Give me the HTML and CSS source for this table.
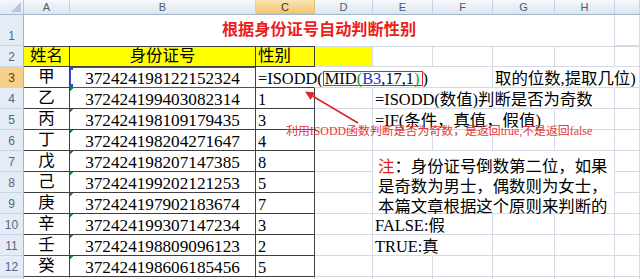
FILE: index.html
```html
<!DOCTYPE html>
<html lang="zh-CN">
<head>
<meta charset="utf-8">
<title>根据身份证号自动判断性别</title>
<link rel="stylesheet" href="styles.css">
</head>
<body>
<div class="sheet">
  <div class="grid">
    <div class="corner"><span class="tri"></span></div>
    <div class="ch">A</div><div class="ch">B</div><div class="ch sel">C</div><div class="ch">D</div><div class="ch">E</div><div class="ch">F</div><div class="ch">G</div><div class="ch">H</div><div class="ch"></div>

    <div class="rh">1</div>
    <div class="cell title">根据身份证号自动判断性别</div>
    <div class="cell"></div>

    <div class="rh">2</div>
    <div class="cell tb yl ctr topd name">姓名</div>
    <div class="cell tb yl ctr topd name">身份证号</div>
    <div class="cell tb yl topd name">性别</div>
    <div class="cell yl topg"></div>
    <div class="cell topg"></div><div class="cell topg"></div><div class="cell topg"></div><div class="cell topg"></div><div class="cell topg"></div>

    <div class="rh sel">3</div>
    <div class="cell tb ctr name">甲</div>
    <div class="cell tb ctr id ref">372424198122152324</div>
    <div class="cell tb nr">=ISODD(<span class="box">MID<span class="g">(</span><span class="b">B3</span>,17,1<span class="g">)</span></span>)</div>
    <div class="cell nr"></div>
    <div class="cell nr"></div>
    <div class="cell"></div>
    <div class="cell nr">取的位数,提取几位)</div>
    <div class="cell nr"></div>
    <div class="cell"></div>

    <div class="rh">4</div>
    <div class="cell tb ctr name">乙</div>
    <div class="cell tb ctr id gt">372424199403082314</div>
    <div class="cell tb">1</div>
    <div class="cell"></div>
    <div class="cell nr">=ISODD(数值)判断是否为奇数</div>
    <div class="cell nr"></div>
    <div class="cell nr"></div>
    <div class="cell"></div>
    <div class="cell"></div>

    <div class="rh">5</div>
    <div class="cell tb ctr name">丙</div>
    <div class="cell tb ctr id gt">372424198109179435</div>
    <div class="cell tb">3</div>
    <div class="cell"></div>
    <div class="cell nr">=IF(条件，真值，假值)</div>
    <div class="cell nr"></div>
    <div class="cell"></div>
    <div class="cell"></div>
    <div class="cell"></div>

    <div class="rh">6</div>
    <div class="cell tb ctr name">丁</div>
    <div class="cell tb ctr id gt">372424198204271647</div>
    <div class="cell tb">4</div>
    <div class="cell"></div><div class="cell"></div><div class="cell"></div><div class="cell"></div><div class="cell"></div><div class="cell"></div>

    <div class="rh">7</div>
    <div class="cell tb ctr name">戊</div>
    <div class="cell tb ctr id gt">372424198207147385</div>
    <div class="cell tb">8</div>
    <div class="cell"></div>
    <div class="cell note"><span class="red">注</span>：身份证号倒数第二位，如果<br>是奇数为男士，偶数则为女士，<br>本篇文章根据这个原则来判断的</div>
    <div class="cell"></div>

    <div class="rh">8</div>
    <div class="cell tb ctr name">己</div>
    <div class="cell tb ctr id gt">372424199202121253</div>
    <div class="cell tb">5</div>
    <div class="cell"></div>
    <div class="cell"></div>

    <div class="rh">9</div>
    <div class="cell tb ctr name">庚</div>
    <div class="cell tb ctr id gt">372424197902183674</div>
    <div class="cell tb">7</div>
    <div class="cell"></div>
    <div class="cell"></div>

    <div class="rh">10</div>
    <div class="cell tb ctr name">辛</div>
    <div class="cell tb ctr id gt">372424199307147234</div>
    <div class="cell tb">3</div>
    <div class="cell"></div>
    <div class="cell nr">FALSE:假</div>
    <div class="cell"></div><div class="cell"></div><div class="cell"></div><div class="cell"></div>

    <div class="rh">11</div>
    <div class="cell tb ctr name">壬</div>
    <div class="cell tb ctr id gt">372424198809096123</div>
    <div class="cell tb">2</div>
    <div class="cell"></div>
    <div class="cell nr">TRUE:真</div>
    <div class="cell"></div><div class="cell"></div><div class="cell"></div><div class="cell"></div>

    <div class="rh">12</div>
    <div class="cell tb ctr name">癸</div>
    <div class="cell tb ctr id gt">372424198606185456</div>
    <div class="cell tb">5</div>
    <div class="cell"></div><div class="cell"></div><div class="cell"></div><div class="cell"></div><div class="cell"></div><div class="cell"></div>

    <div class="rh"></div>
    <div class="cell"></div><div class="cell"></div><div class="cell"></div><div class="cell"></div><div class="cell"></div><div class="cell"></div><div class="cell"></div><div class="cell"></div><div class="cell"></div>
  </div>

  <div class="callout">利用ISODD函数判断是否为奇数，是返回true,不是返回false</div>
  <svg class="arrow" width="640" height="279" viewBox="0 0 640 279" aria-hidden="true">
    <line x1="358" y1="123" x2="312.5" y2="96" stroke="#e02626" stroke-width="1.6"/>
    <polygon points="305,91.5 315,92.6 310.6,100" fill="#e02626"/>
  </svg>
</div>
</body>
</html>
```

FILE: styles.css
```css
* { box-sizing: border-box; }
html, body { margin: 0; padding: 0; background: #fff; }
body {
  width: 640px;
  height: 279px;
  overflow: hidden;
  font-family: "Liberation Serif", "Noto Sans CJK SC", serif;
  color: #000;
}
.sheet {
  position: relative;
  width: 640px;
  height: 279px;
  overflow: hidden;
}
.grid {
  display: grid;
  grid-template-columns: 24px 46px 186px 59px 58px 60px 60px 62px 60px 25px;
  grid-template-rows: 15px 31px repeat(12, 21px);
}
.corner {
  background: linear-gradient(#f4f7fb, #dfe6f0);
  border-right: 1px solid #b6c6da;
  border-bottom: 1px solid #9eb6ce;
  display: flex;
  justify-content: flex-end;
  align-items: flex-end;
  padding: 0 2px 2px 0;
}
.tri {
  width: 0;
  height: 0;
  border-left: 10px solid transparent;
  border-bottom: 10px solid #b7c6da;
}
.ch {
  background: linear-gradient(#f7f9fc, #dce4ee);
  border-right: 1px solid #c5d2e2;
  border-bottom: 1px solid #9eb6ce;
  font: 11px "Liberation Sans", sans-serif;
  color: #4c5a70;
  display: flex;
  align-items: center;
  justify-content: center;
}
.ch.sel {
  background: linear-gradient(#fbe3b3, #f3c36a);
  border-right-color: #dcb978;
  color: #3a3a3a;
}
.rh {
  background: #e4ecf7;
  border-right: 1px solid #9eb6ce;
  border-bottom: 1px solid #c8d5e6;
  font: 12px "Liberation Sans", sans-serif;
  color: #5a6578;
  display: flex;
  align-items: flex-end;
  justify-content: center;
  padding-bottom: 2px;
}
.rh.sel { background: #f8cf88; color: #4a3d20; }

.cell {
  border-right: 1px solid #d4dae6;
  border-bottom: 1px solid #d4dae6;
  padding: 4px 2px 0;
  font-size: 16.4px;
  line-height: 16px;
  white-space: nowrap;
  min-width: 0;
}
.tb { border-right-color: #404040; border-bottom-color: #404040; }
.nr { border-right-color: transparent; }
.ctr { text-align: center; }
.yl { background-color: #ffff00; }
.topd { box-shadow: inset 0 1px 0 #404040; }
.topg { box-shadow: inset 0 1px 0 #d4dae6; }
.name { padding-top: 2px; }
.id { font-size: 17.2px; }
.gt {
  background: linear-gradient(135deg, #1e8a3a 0 2.6px, transparent 2.6px) no-repeat 0 0 / 5px 5px;
}
.ref {
  border-bottom-color: #2b50d8;
  box-shadow: inset 1px 1px 0 #2b50d8;
  background:
    linear-gradient(#2b50d8, #2b50d8) no-repeat 0 0 / 3px 3px,
    linear-gradient(#2b50d8, #2b50d8) no-repeat 0 100% / 3px 3px;
}
.title {
  grid-column: span 8;
  border-bottom: none;
  border-right-color: #d4dae6;
  padding: 0;
  text-align: center;
  line-height: 31px;
  font-size: 16.2px;
  font-weight: 700;
  color: #ee1c1c;
}
.box {
  display: inline-block;
  border: 1.6px solid #e42424;
  padding: 0 2px 0 1px;
  line-height: 13px;
}
.g { color: #1f9a3c; }
.b { color: #2233cc; }
.red { color: #e81c1c; }
.note {
  grid-area: 8 / 6 / 11 / 10;
  background: #fff;
  padding: 4px 0 0 5px;
  line-height: 20px;
  font-family: "Noto Sans CJK SC", sans-serif;
  font-size: 16.4px;
}

.callout {
  position: absolute;
  left: 286px;
  top: 124px;
  font-size: 11.9px;
  line-height: 14px;
  color: #e53535;
  white-space: nowrap;
}
.arrow {
  position: absolute;
  left: 0;
  top: 0;
  pointer-events: none;
}
```
